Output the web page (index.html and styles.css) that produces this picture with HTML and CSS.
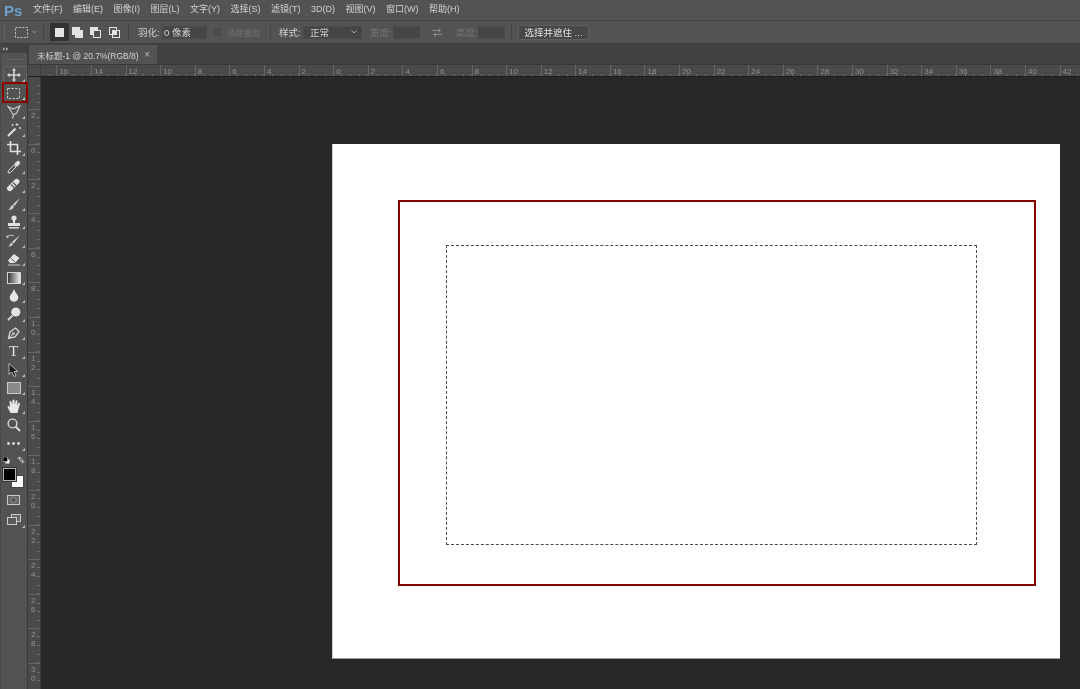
FILE: index.html
```html
<!DOCTYPE html>
<html lang="en">

<head>
    <meta charset="UTF-8">
    <meta name="viewport" content="width=device-width, initial-scale=1.0">
    <title>Photoshop</title>
    <link rel="stylesheet" href="styles.css">
</head>

<body>
    <div id="menu_bar">
        <span id="logo">Ps</span>
        <span class="menu_item">文件(F)</span>
        <span class="menu_item">编辑(E)</span>
        <span class="menu_item">图像(I)</span>
        <span class="menu_item">图层(L)</span>
        <span class="menu_item">文字(Y)</span>
        <span class="menu_item">选择(S)</span>
        <span class="menu_item">滤镜(T)</span>
        <span class="menu_item">3D(D)</span>
        <span class="menu_item">视图(V)</span>
        <span class="menu_item">窗口(W)</span>
        <span class="menu_item">帮助(H)</span>
    </div>

    <div id="options_bar">
        <div class="grip"></div>
        <svg class="opt_marquee" width="13" height="11" viewBox="0 0 13 11"><rect x="0.5" y="0.5" width="12" height="10" fill="none" stroke="#c8c8c8" stroke-dasharray="2 1.4"/></svg>
        <svg class="opt_chevron" width="5" height="4" viewBox="0 0 6 4"><path d="M0.5 0.5 L3 3 L5.5 0.5" fill="none" stroke="#a8a8a8"/></svg>
        <div class="divider d1"></div>
        <div class="mode_btn mode_on"><svg width="9" height="9" viewBox="0 0 9 9"><rect width="9" height="9" fill="#e4e4e4"/></svg></div>
        <div class="mode_btn"><svg width="12" height="11" viewBox="0 0 12 11"><rect width="8" height="8" fill="#e4e4e4"/><rect x="3" y="3" width="8" height="8" fill="#e4e4e4"/></svg></div>
        <div class="mode_btn"><svg width="12" height="11" viewBox="0 0 12 11"><rect width="8" height="8" fill="#e4e4e4"/><rect x="3.5" y="3.5" width="7" height="7" fill="#535353" stroke="#e4e4e4"/></svg></div>
        <div class="mode_btn"><svg width="12" height="11" viewBox="0 0 12 11"><rect x="0.5" y="0.5" width="7" height="7" fill="none" stroke="#e4e4e4"/><rect x="3.5" y="3.5" width="7" height="7" fill="none" stroke="#e4e4e4"/><rect x="3.5" y="3.5" width="4" height="4" fill="#e4e4e4"/></svg></div>
        <div class="divider d2"></div>
        <span class="opt_label l_feather">羽化:</span>
        <div class="field f_feather">0 像素</div>
        <div class="check"></div>
        <span class="opt_label dim l_anti">消除锯齿</span>
        <div class="divider d3"></div>
        <span class="opt_label l_style">样式:</span>
        <div class="field f_style">正常<svg width="6" height="4" viewBox="0 0 6 4"><path d="M0.5 0.5 L3 3 L5.5 0.5" fill="none" stroke="#a8a8a8"/></svg></div>
        <span class="opt_label dim l_width">宽度:</span>
        <div class="field f_size"></div>
        <svg class="swap" width="10" height="9" viewBox="0 0 10 9"><path d="M0 2.5 H8 M6 0.5 L8.5 2.5 L6 4.5 M10 6.5 H2 M4 4.5 L1.5 6.5 L4 8.5" fill="none" stroke="#8c8c8c"/></svg>
        <span class="opt_label dim l_height">高度:</span>
        <div class="field f_size"></div>
        <div class="divider d4"></div>
        <div id="mask_btn">选择并遮住 ...</div>
    </div>

    <div id="main">
        <div id="tool_bar">
            <div id="tool_head"><svg width="5" height="4" viewBox="0 0 5 4"><path d="M0 0 L2 2 L0 4 Z M3 0 L5 2 L3 4 Z" fill="#b0b0b0"/></svg></div>
            <div id="tool_grip"></div>

            <div class="tool tool_move corner"><svg width="14" height="14" viewBox="0 0 14 14"><path d="M7 0 L9.2 2.6 H7.8 V6.2 H11.4 V4.8 L14 7 L11.4 9.2 V7.8 H7.8 V11.4 H9.2 L7 14 L4.8 11.4 H6.2 V7.8 H2.6 V9.2 L0 7 L2.6 4.8 V6.2 H6.2 V2.6 H4.8 Z" fill="#d4d4d4"/></svg></div>
            <div class="tool tool_active corner"><svg width="13" height="11" viewBox="0 0 13 11"><rect x="0.5" y="0.5" width="12" height="10" fill="none" stroke="#c8c8c8" stroke-dasharray="2.4 1.4"/></svg></div>
            <div class="tool corner"><svg width="14" height="14" viewBox="0 0 14 14"><path d="M1 1.5 L6 4 L13 1 L9.5 8 L6.5 10 Z M6.5 10 L5.5 13.5" fill="none" stroke="#c8c8c8" stroke-width="1.2"/></svg></div>
            <div class="tool corner"><svg width="14" height="14" viewBox="0 0 14 14"><path d="M1 13 L8.5 5.5" stroke="#e0e0e0" stroke-width="2"/><path d="M10 0 V3 M8.5 1.5 H11.5 M13 4 V6 M12 5 H14 M5.5 1 V3 M4.5 2 H6.5" stroke="#d0d0d0"/></svg></div>
            <div class="tool corner"><svg width="14" height="14" viewBox="0 0 14 14"><path d="M3.5 0 V10.5 H14 M0 3.5 H10.5 V14" fill="none" stroke="#e0e0e0" stroke-width="1.6"/></svg></div>
            <div class="tool corner"><svg width="14" height="14" viewBox="0 0 14 14"><path d="M1 13 L1.5 10.5 L7 5 L9 7 L3.5 12.5 Z" fill="none" stroke="#d8d8d8"/><path d="M7 4 L10 1.2 Q11.3 0.2 12.5 1.5 Q13.8 2.8 12.8 4 L10 7 Z" fill="#e0e0e0"/></svg></div>
            <div class="tool corner"><svg width="15" height="14" viewBox="0 0 15 14"><path d="M1.5 9 L9 1.5 Q10.5 0 12.5 1.5 Q14.5 3.5 13 5 L5.5 12.5 Q4 14 2 12.5 Q0 10.5 1.5 9 Z" fill="#e4e4e4"/><path d="M5 6.5 L8.5 10 M7 4.5 L10.5 8" stroke="#555" stroke-width="1.2"/></svg></div>
            <div class="tool corner"><svg width="14" height="14" viewBox="0 0 14 14"><path d="M13 1 L6 7.5 L7.5 9 Z" fill="#e0e0e0"/><path d="M5.5 8 L7 9.5 Q6 13 1 13 Q3.5 11.5 3.5 10 Q4 8.5 5.5 8 Z" fill="#d0d0d0"/></svg></div>
            <div class="tool corner"><svg width="14" height="14" viewBox="0 0 14 14"><circle cx="7" cy="3" r="2.6" fill="#e0e0e0"/><path d="M6 5 H8 V8 H13 V11 H1 V8 H6 Z" fill="#e0e0e0"/><rect x="2" y="12" width="10" height="1.6" fill="#d0d0d0"/></svg></div>
            <div class="tool corner"><svg width="15" height="14" viewBox="0 0 15 14"><path d="M14 1 L6 8 L7.5 9.5 Z" fill="#e0e0e0"/><path d="M5.5 8.5 L7 10 Q5.5 13 2 12.5 Q4 11.5 4 10 Z" fill="#d0d0d0"/><path d="M1 3.5 A5 5 0 0 1 8 2" fill="none" stroke="#c8c8c8"/><path d="M0 1.5 L1.5 4.5 L3 2 Z" fill="#c8c8c8"/></svg></div>
            <div class="tool corner"><svg width="14" height="13" viewBox="0 0 14 13"><path d="M7 1 L12.5 5 L8 10 L3 10 L1 7.5 Z" fill="#e4e4e4"/><path d="M4 5.5 L8.5 9.5" stroke="#555"/><path d="M1 12 H13" stroke="#c8c8c8"/></svg></div>
            <div class="tool corner"><svg width="14" height="12" viewBox="0 0 14 12"><defs><linearGradient id="grad_tool"><stop offset="0" stop-color="#333"/><stop offset="1" stop-color="#f2f2f2"/></linearGradient></defs><rect x="0.5" y="0.5" width="13" height="11" fill="url(#grad_tool)" stroke="#d4d4d4"/></svg></div>
            <div class="tool corner"><svg width="10" height="13" viewBox="0 0 10 13"><path d="M5 0 Q6 3 8.5 6 Q10.5 9.5 7.5 12 Q5 13.5 2.5 12 Q-0.5 9.5 1.5 6 Q4 3 5 0 Z" fill="#e4e4e4"/></svg></div>
            <div class="tool corner"><svg width="14" height="14" viewBox="0 0 14 14"><circle cx="8.8" cy="5" r="4.6" fill="#e4e4e4"/><path d="M5.5 8.5 L1 13" stroke="#d4d4d4" stroke-width="1.8"/></svg></div>
            <div class="tool corner"><svg width="14" height="14" viewBox="0 0 14 14"><path d="M1.5 12.5 L3 6 L8.5 2 L12 5.5 L8 11 Z" fill="none" stroke="#d8d8d8" stroke-width="1.3"/><path d="M1.5 12.5 L6 8" stroke="#d8d8d8"/><circle cx="6.5" cy="7.5" r="1.2" fill="#d8d8d8"/></svg></div>
            <div class="tool corner"><span class="type_tool">T</span></div>
            <div class="tool corner"><svg width="11" height="14" viewBox="0 0 11 14"><path d="M1 0.5 V11.5 L3.8 9 L6 13.5 L8 12.5 L6 8.5 H9.8 Z" fill="#1c1c1c" stroke="#d0d0d0" stroke-width="0.8"/></svg></div>
            <div class="tool corner"><svg width="14" height="12" viewBox="0 0 14 12"><rect x="0.5" y="0.5" width="13" height="11" fill="#8a8a8a" stroke="#c8c8c8"/></svg></div>
            <div class="tool corner"><svg width="14" height="15" viewBox="0 0 14 15"><path d="M3.5 14 L0.8 8.5 Q0 7 1.5 6.8 L3 8.3 L2.5 2.5 Q3 1.2 4.2 2.2 L5.2 5.5 L5.5 1 Q6.5 0 7.4 1 L7.8 5.5 L8.8 1.5 Q9.8 0.8 10.5 2 L10 6.5 L11.5 3.8 Q12.8 3.5 13 4.8 L11.5 10 L10.5 14 Z" fill="#e8e8e8"/></svg></div>
            <div class="tool"><svg width="14" height="14" viewBox="0 0 14 14"><circle cx="5.5" cy="5.5" r="4.4" fill="none" stroke="#dcdcdc" stroke-width="1.4"/><path d="M8.8 8.8 L13 13" stroke="#dcdcdc" stroke-width="2"/></svg></div>
            <div class="tool corner"><svg width="13" height="3" viewBox="0 0 13 3"><circle cx="1.5" cy="1.5" r="1.4" fill="#dcdcdc"/><circle cx="6.5" cy="1.5" r="1.4" fill="#dcdcdc"/><circle cx="11.5" cy="1.5" r="1.4" fill="#dcdcdc"/></svg></div>

            <div id="color_minis">
                <svg width="7" height="7" viewBox="0 0 7 7"><rect x="2.5" y="2.5" width="4" height="4" fill="#fff"/><rect x="0" y="0" width="4.5" height="4.5" fill="#000" stroke="#ccc" stroke-width="0.6"/></svg>
                <svg width="8" height="8" viewBox="0 0 8 8"><path d="M0.5 3 L2.5 1 L4.5 3 M2.5 1 V2 Q2.5 5.5 5 5.5 H6 M5 3.5 L7 5.5 L5 7.5" fill="none" stroke="#d0d0d0"/></svg>
            </div>
            <div id="color_swatches">
                <div id="color_back"></div>
                <div id="color_fore"></div>
            </div>
            <div class="tool tool_low"><svg width="13" height="10" viewBox="0 0 13 10"><rect x="0.5" y="0.5" width="12" height="9" fill="#666" stroke="#c8c8c8"/><circle cx="6.5" cy="5" r="2.6" fill="#555" stroke="#c8c8c8" stroke-dasharray="1.2 1"/></svg></div>
            <div class="tool tool_low corner"><svg width="14" height="11" viewBox="0 0 14 11"><rect x="4.5" y="0.5" width="9" height="7" fill="#666" stroke="#c8c8c8"/><rect x="0.5" y="3.5" width="9" height="7" fill="#5a5a5a" stroke="#c8c8c8"/></svg></div>
        </div>

        <div id="doc_area">
            <div id="tab_row">
                <div id="doc_tab"><span>未标题-1 @ 20.7%(RGB/8)</span><span id="tab_close">×</span></div>
            </div>
            <div id="ruler_corner"></div>
            <div id="h_ruler">
                <div class="h_cell h_first"></div>
                <div class="h_cell">16</div>
                <div class="h_cell">14</div>
                <div class="h_cell">12</div>
                <div class="h_cell">10</div>
                <div class="h_cell">8</div>
                <div class="h_cell">6</div>
                <div class="h_cell">4</div>
                <div class="h_cell">2</div>
                <div class="h_cell">0</div>
                <div class="h_cell">2</div>
                <div class="h_cell">4</div>
                <div class="h_cell">6</div>
                <div class="h_cell">8</div>
                <div class="h_cell">10</div>
                <div class="h_cell">12</div>
                <div class="h_cell">14</div>
                <div class="h_cell">16</div>
                <div class="h_cell">18</div>
                <div class="h_cell">20</div>
                <div class="h_cell">22</div>
                <div class="h_cell">24</div>
                <div class="h_cell">26</div>
                <div class="h_cell">28</div>
                <div class="h_cell">30</div>
                <div class="h_cell">32</div>
                <div class="h_cell">34</div>
                <div class="h_cell">36</div>
                <div class="h_cell">38</div>
                <div class="h_cell">40</div>
                <div class="h_cell">42</div>
            </div>
            <div id="v_ruler">
                <div class="v_cell v_first"></div>
                <div class="v_cell"><span>2</span></div>
                <div class="v_cell"><span>0</span></div>
                <div class="v_cell"><span>2</span></div>
                <div class="v_cell"><span>4</span></div>
                <div class="v_cell"><span>6</span></div>
                <div class="v_cell"><span>8</span></div>
                <div class="v_cell"><span>10</span></div>
                <div class="v_cell"><span>12</span></div>
                <div class="v_cell"><span>14</span></div>
                <div class="v_cell"><span>16</span></div>
                <div class="v_cell"><span>18</span></div>
                <div class="v_cell"><span>20</span></div>
                <div class="v_cell"><span>22</span></div>
                <div class="v_cell"><span>24</span></div>
                <div class="v_cell"><span>26</span></div>
                <div class="v_cell"><span>28</span></div>
                <div class="v_cell"><span>30</span></div>
            </div>
            <div id="work_space">
                <div id="document">
                    <div id="red_frame">
                        <div id="selection"></div>
                    </div>
                </div>
            </div>
        </div>
    </div>
</body>

</html>
```
FILE: styles.css
```css
* {
    box-sizing: border-box;
    margin: 0;
    padding: 0;
}

body {
    width: 1080px;
    height: 689px;
    overflow: hidden;
    display: flex;
    flex-direction: column;
    background: #535353;
    color: #d2d2d2;
    font-family: "Liberation Sans", "Noto Sans CJK SC", sans-serif;
    font-size: 10px;
}

/* the reference is a soft resampled capture */
#menu_bar,
#options_bar,
#tool_bar,
#tab_row,
#h_ruler,
#v_ruler {
    filter: blur(0.35px);
}

/* top menu */
#menu_bar {
    height: 20px;
    flex: none;
    display: flex;
    align-items: center;
    background: #535353;
}

#logo {
    width: 33px;
    padding-left: 4px;
    color: #6f9fc9;
    font-size: 15px;
    font-weight: bold;
}

.menu_item {
    margin-right: 10.5px;
    padding-bottom: 3px;
    font-size: 9px;
    white-space: nowrap;
}

/* options */
#options_bar {
    height: 24px;
    flex: none;
    display: flex;
    align-items: center;
    border-top: 1px solid #444;
    border-bottom: 1px solid #3c3c3c;
    background: #535353;
    font-size: 9.5px;
}

.grip {
    width: 2px;
    height: 14px;
    margin-left: 4px;
    border-left: 1px dotted #777;
}

.opt_marquee {
    margin-left: 9px;
}

.opt_chevron {
    margin-left: 4px;
}

.divider {
    width: 1px;
    height: 16px;
    background: #444;
}

.d1 {
    margin: 0 6px;
}

.d2 {
    margin: 0 9px 0 4px;
}

.d3 {
    margin: 0 8px 0 10px;
}

.d4 {
    margin: 0 6px;
}

.mode_btn {
    width: 18.5px;
    height: 18px;
    display: flex;
    align-items: center;
    justify-content: center;
}

.mode_on {
    background: #333;
}

.opt_label {
    white-space: nowrap;
}

.dim {
    color: #757575;
}

.field {
    height: 13px;
    display: flex;
    align-items: center;
    background: #454545;
    border: 1px solid #4a4a4a;
    white-space: nowrap;
}

.l_feather {
    width: 24px;
}

.f_feather {
    width: 45px;
    padding-left: 1px;
}

.check {
    width: 8px;
    height: 8px;
    margin: 0 5px 0 7px;
    background: #4c4c4c;
    border: 1px solid #4a4a4a;
}

.l_anti {
    width: 33px;
    overflow: hidden;
    font-size: 8.2px;
}

.l_style {
    width: 24px;
}

.f_style {
    width: 59px;
    padding: 0 4px 0 6px;
    justify-content: space-between;
}

.l_width {
    margin-left: 8px;
    width: 23px;
}

.f_size {
    width: 27px;
}

.swap {
    margin: 0 14px 0 12px;
}

.l_height {
    width: 22px;
}

#mask_btn {
    width: 71px;
    height: 15px;
    display: flex;
    align-items: center;
    justify-content: center;
    background: #474747;
    border: 1px solid #5f5f5f;
    border-radius: 2px;
    color: #e0e0e0;
    white-space: nowrap;
}

/* main area */
#main {
    flex: 1;
    min-height: 0;
    display: flex;
}

#tool_bar {
    width: 28px;
    flex: none;
    display: flex;
    flex-direction: column;
    align-items: stretch;
    padding-left: 2px;
    background: #535353;
    border-left: 1px solid #484848;
    border-right: 1px solid #383838;
}

#tool_head {
    height: 9px;
    display: flex;
    align-items: center;
    padding-left: 2px;
    margin-left: -2px;
    background: #424242;
}

#tool_grip {
    height: 0;
    margin: 6px 4px 5.5px 4px;
    border-top: 1px dotted #6e6e6e;
}

.tool {
    height: 18.45px;
    flex: none;
    display: flex;
    align-items: center;
    justify-content: center;
    position: relative;
    padding-right: 3px;
}

.tool_move {
    outline: 1px solid #656565;
    outline-offset: -1px;
    border-radius: 2px;
}

.tool_active::before {
    content: "";
    position: absolute;
    left: -1px;
    right: -1px;
    top: -2px;
    bottom: -1px;
    border: 2.5px solid #8c0000;
}

.corner::after {
    content: "";
    position: absolute;
    right: 2px;
    bottom: 2px;
    border-style: solid;
    border-width: 0 0 3px 3px;
    border-color: transparent transparent #bbb transparent;
}

.tool_low {
    height: 20px;
}

.type_tool {
    font-family: "Liberation Serif", serif;
    font-size: 15px;
    color: #e2e2e2;
    line-height: 1;
}

#color_minis {
    height: 11px;
    margin-top: 2px;
    display: flex;
    justify-content: space-between;
    align-items: center;
    padding: 0 2px 0 0;
}

#color_swatches {
    height: 20.5px;
    margin: 2px 0 1.5px;
    position: relative;
}

#color_fore,
#color_back {
    position: absolute;
    width: 13px;
    height: 13px;
}

#color_fore {
    left: 0;
    top: 0;
    background: #000;
    border: 1px solid #b4b4b4;
    outline: 1px solid #333;
}

#color_back {
    left: 8px;
    top: 7px;
    background: #fff;
    border: 1px solid #444;
}

/* document area, tab + rulers + workspace */
#doc_area {
    flex: 1;
    min-width: 0;
    display: grid;
    grid-template-columns: 13px 1fr;
    grid-template-rows: 21px 12px 1fr;
    overflow: hidden;
}

#tab_row {
    grid-column: 1 / 3;
    background: #424242;
    padding-top: 1px;
    border-bottom: 1px solid #383838;
}

#doc_tab {
    width: 128px;
    height: 19px;
    margin-left: 1px;
    padding: 0 7px 0 8px;
    display: flex;
    align-items: center;
    justify-content: space-between;
    background: #535353;
    font-size: 8.5px;
    white-space: nowrap;
}

#tab_close {
    font-size: 10px;
    color: #bbb;
}

#ruler_corner {
    background: #4a4a4a;
    border-bottom: 1px solid #1e1e1e;
    border-right: 1px solid #3e3e3e;
}

#h_ruler {
    display: flex;
    background: #4a4a4a;
    border-bottom: 1px solid #1e1e1e;
    overflow: hidden;
}

.h_cell {
    width: 34.6px;
    flex: none;
    padding: 2px 0 0 2px;
    border-left: 1px solid #666;
    background-image: repeating-linear-gradient(to right, transparent 0 7.65px, #6c6c6c 7.65px 8.65px);
    background-size: 100% 2px;
    background-position: bottom;
    background-repeat: no-repeat;
    color: #929292;
    font-size: 8px;
    line-height: 9px;
}

.h_first {
    width: 15.4px;
    border-left: 0;
}

#v_ruler {
    background: #4a4a4a;
    overflow: hidden;
    border-right: 1px solid #3c3c3c;
}

.v_cell {
    height: 34.6px;
    padding: 1px 0 0 3px;
    border-top: 1px solid #666;
    background-image: repeating-linear-gradient(to bottom, transparent 0 7.65px, #6c6c6c 7.65px 8.65px);
    background-size: 3px 100%;
    background-position: right;
    background-repeat: no-repeat;
    color: #929292;
    font-size: 8px;
    line-height: 9px;
}

.v_cell span {
    display: block;
    width: 6px;
    word-break: break-all;
}

.v_first {
    height: 32.4px;
    border-top: 0;
}

#work_space {
    background: #282828;
    padding: 67px 0 0 291px;
    overflow: hidden;
}

#document {
    width: 728px;
    height: 515px;
    padding: 56px 0 0 65px;
    background: #fff;
    border-left: 1px solid #ccc;
    border-bottom: 1px solid #9a9a9a;
}

#red_frame {
    width: 638px;
    height: 386px;
    padding: 43px 0 0 46px;
    border: 2.5px solid #840000;
}

#selection {
    width: 531px;
    height: 300px;
    border: 1px dashed #4a4a4a;
}
```
